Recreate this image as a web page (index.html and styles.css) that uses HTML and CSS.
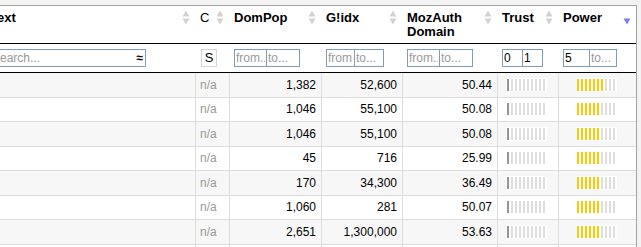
FILE: index.html
```html
<!DOCTYPE html>
<html>
<head>
<meta charset="utf-8">
<title>Table</title>
<link rel="stylesheet" href="styles.css">
</head>
<body>
<div class="page">
  <div class="tbl">
    <div class="row head">
      <div class="th"><span class="lbl">Text</span><svg class="sort" width="8" height="15" viewBox="0 0 8 15"><path d="M4 0.5L7.5 6.5H0.5Z"/><path d="M0.5 8.5H7.5L4 14.5Z"/></svg></div>
      <div class="th"><span class="lbl thin">C</span><svg class="sort" width="8" height="15" viewBox="0 0 8 15"><path d="M4 0.5L7.5 6.5H0.5Z"/><path d="M0.5 8.5H7.5L4 14.5Z"/></svg></div>
      <div class="th"><span class="lbl">DomPop</span><svg class="sort" width="8" height="15" viewBox="0 0 8 15"><path d="M4 0.5L7.5 6.5H0.5Z"/><path d="M0.5 8.5H7.5L4 14.5Z"/></svg></div>
      <div class="th"><span class="lbl">G!idx</span><svg class="sort" width="8" height="15" viewBox="0 0 8 15"><path d="M4 0.5L7.5 6.5H0.5Z"/><path d="M0.5 8.5H7.5L4 14.5Z"/></svg></div>
      <div class="th"><span class="lbl">MozAuth<br>Domain</span><svg class="sort" width="8" height="15" viewBox="0 0 8 15"><path d="M4 0.5L7.5 6.5H0.5Z"/><path d="M0.5 8.5H7.5L4 14.5Z"/></svg></div>
      <div class="th"><span class="lbl">Trust</span><svg class="sort" width="8" height="15" viewBox="0 0 8 15"><path d="M4 0.5L7.5 6.5H0.5Z"/><path d="M0.5 8.5H7.5L4 14.5Z"/></svg></div>
      <div class="th"><span class="lbl">Power</span><svg class="sort desc" width="8" height="15" viewBox="0 0 8 15"><path d="M0.5 8.5H7.5L4 14.5Z"/></svg></div>
    </div>
    <div class="row filters">
      <div class="tf"><div class="search"><input class="sin" type="text" placeholder="Search..."><span class="approx">≈</span></div></div>
      <div class="tf"><span class="sbtn">S</span></div>
      <div class="tf"><input class="fi w33" placeholder="from..."><input class="fi w34" placeholder="to..."></div>
      <div class="tf"><input class="fi w29" placeholder="from..."><input class="fi w30" placeholder="to..."></div>
      <div class="tf"><input class="fi w33" placeholder="from..."><input class="fi w34" placeholder="to..."></div>
      <div class="tf"><input class="fi w21" value="0"><input class="fi w21" value="1"></div>
      <div class="tf"><input class="fi w27" value="5"><input class="fi w28" placeholder="to..."></div>
    </div>

    <div class="row body alt">
      <div class="td"></div><div class="td na">n/a</div><div class="td num">1,382</div><div class="td num">52,600</div><div class="td num">50.44</div>
      <div class="td bc"><div class="bar trust"><i class="on"></i><i></i><i></i><i></i><i></i><i></i><i></i><i></i><i></i><i></i></div></div>
      <div class="td bc"><div class="bar power"><i class="on"></i><i class="on"></i><i class="on"></i><i class="on"></i><i class="on"></i><i class="on"></i><i class="on"></i><i></i><i></i><i></i></div></div>
    </div>
    <div class="row body">
      <div class="td"></div><div class="td na">n/a</div><div class="td num">1,046</div><div class="td num">55,100</div><div class="td num">50.08</div>
      <div class="td bc"><div class="bar trust"><i class="on"></i><i></i><i></i><i></i><i></i><i></i><i></i><i></i><i></i><i></i></div></div>
      <div class="td bc"><div class="bar power"><i class="on"></i><i class="on"></i><i class="on"></i><i class="on"></i><i class="on"></i><i class="on"></i><i></i><i></i><i></i><i></i></div></div>
    </div>
    <div class="row body alt">
      <div class="td"></div><div class="td na">n/a</div><div class="td num">1,046</div><div class="td num">55,100</div><div class="td num">50.08</div>
      <div class="td bc"><div class="bar trust"><i class="on"></i><i></i><i></i><i></i><i></i><i></i><i></i><i></i><i></i><i></i></div></div>
      <div class="td bc"><div class="bar power"><i class="on"></i><i class="on"></i><i class="on"></i><i class="on"></i><i class="on"></i><i class="on"></i><i></i><i></i><i></i><i></i></div></div>
    </div>
    <div class="row body">
      <div class="td"></div><div class="td na">n/a</div><div class="td num">45</div><div class="td num">716</div><div class="td num">25.99</div>
      <div class="td bc"><div class="bar trust"><i class="on"></i><i></i><i></i><i></i><i></i><i></i><i></i><i></i><i></i><i></i></div></div>
      <div class="td bc"><div class="bar power"><i class="on"></i><i class="on"></i><i class="on"></i><i class="on"></i><i class="on"></i><i class="on"></i><i></i><i></i><i></i><i></i></div></div>
    </div>
    <div class="row body alt">
      <div class="td"></div><div class="td na">n/a</div><div class="td num">170</div><div class="td num">34,300</div><div class="td num">36.49</div>
      <div class="td bc"><div class="bar trust"><i class="on"></i><i></i><i></i><i></i><i></i><i></i><i></i><i></i><i></i><i></i></div></div>
      <div class="td bc"><div class="bar power"><i class="on"></i><i class="on"></i><i class="on"></i><i class="on"></i><i class="on"></i><i class="on"></i><i></i><i></i><i></i><i></i></div></div>
    </div>
    <div class="row body">
      <div class="td"></div><div class="td na">n/a</div><div class="td num">1,060</div><div class="td num">281</div><div class="td num">50.07</div>
      <div class="td bc"><div class="bar trust"><i class="on"></i><i></i><i></i><i></i><i></i><i></i><i></i><i></i><i></i><i></i></div></div>
      <div class="td bc"><div class="bar power"><i class="on"></i><i class="on"></i><i class="on"></i><i class="on"></i><i class="on"></i><i class="on"></i><i></i><i></i><i></i><i></i></div></div>
    </div>
    <div class="row body alt">
      <div class="td"></div><div class="td na">n/a</div><div class="td num">2,651</div><div class="td num">1,300,000</div><div class="td num">53.63</div>
      <div class="td bc"><div class="bar trust"><i class="on"></i><i></i><i></i><i></i><i></i><i></i><i></i><i></i><i></i><i></i></div></div>
      <div class="td bc"><div class="bar power"><i class="on"></i><i class="on"></i><i class="on"></i><i class="on"></i><i class="on"></i><i class="on"></i><i></i><i></i><i></i><i></i></div></div>
    </div>
    <div class="row body">
      <div class="td"></div><div class="td"></div><div class="td"></div><div class="td"></div><div class="td"></div><div class="td"></div><div class="td"></div>
    </div>
  </div>
</div>
</body>
</html>
```

FILE: styles.css
```css
html, body {
  margin: 0;
  padding: 0;
  background: #f3f3f3;
  overflow: hidden;
  font-family: "Liberation Sans", Arial, sans-serif;
  color: #000;
}

.page {
  padding-top: 5px;
}

.tbl {
  box-sizing: border-box;
  width: 652px;
  margin-left: -15px;
  background: #fff;
  border-top: 1px solid #a3a3a3;
  border-right: 1px solid #a3a3a3;
}

.row {
  display: grid;
  grid-template-columns: 210px 34px 92px 81px 95px 61px 78px;
  box-sizing: border-box;
}

/* header */
.head {
  height: 38px;
  border-bottom: 1px solid #000;
}

.th {
  display: flex;
  justify-content: space-between;
  align-items: flex-start;
  padding: 4.5px 5px 0 5px;
  min-width: 0;
}

.lbl {
  font-size: 13px;
  font-weight: bold;
  line-height: 14.5px;
}

.lbl.thin {
  font-weight: normal;
}

.sort {
  flex: none;
  margin-top: -1px;
  fill: #d2d2d2;
}

.sort.desc {
  fill: #7c7cf2;
}

/* filter row */
.filters {
  height: 29px;
  border-bottom: 1px solid #000;
}

.tf {
  display: flex;
  align-items: flex-start;
  padding: 5px 0 0 5px;
  min-width: 0;
}

.tf:first-child {
  padding-left: 4px;
}

.search {
  box-sizing: border-box;
  display: flex;
  align-items: center;
  width: 157px;
  height: 18px;
  border: 1px solid #7f9db9;
  background: #fff;
}

.sin {
  flex: 1;
  min-width: 0;
  border: 0;
  padding: 0 0 0 2px;
  margin: 0;
  height: 16px;
  font: 12px "Liberation Sans", Arial, sans-serif;
  outline: none;
  background: transparent;
}

.sin::placeholder,
.fi::placeholder {
  color: #9a9a9a;
  opacity: 1;
}

.approx {
  font-size: 12px;
  font-weight: bold;
  line-height: 12px;
  padding-right: 2px;
}

.sbtn {
  box-sizing: border-box;
  width: 16px;
  height: 18px;
  margin-left: 1px;
  border: 1px solid #d6d6d6;
  background: #fff;
  font-size: 13px;
  line-height: 16px;
  text-align: center;
}

.fi {
  box-sizing: border-box;
  height: 18px;
  margin: 0;
  padding: 0 1px;
  border: 1px solid #7f9db9;
  background: #fff;
  font: 12px "Liberation Sans", Arial, sans-serif;
  color: #000;
  outline: none;
}

.fi + .fi {
  margin-left: -1px;
}

.w21 { width: 21px; }
.w27 { width: 27px; }
.w28 { width: 28px; }
.w29 { width: 29px; }
.w30 { width: 30px; }
.w33 { width: 33px; }
.w34 { width: 34px; }

/* body rows */
.body {
  height: 24.5px;
  border-bottom: 1px solid #dcdcdc;
  background: #fff;
}

.body.alt {
  background: #f7f7f7;
}

.td {
  display: flex;
  align-items: center;
  padding: 0 5px;
  font-size: 12px;
  border-left: 1px solid #dcdcdc;
  min-width: 0;
  white-space: nowrap;
}

.td:first-child {
  border-left: 0;
}

.na {
  color: #999;
  padding-left: 4px;
}

.num {
  justify-content: flex-end;
}

.bc {
  justify-content: center;
  padding: 0 3px 0 0;
}

.bar {
  display: flex;
  gap: 2px;
  padding: 1px 2px 1px 1px;
  background: #fff;
}

.bar i {
  display: block;
  width: 2px;
  height: 12px;
  background: #dedede;
}

.bar.trust i.on {
  background: #959595;
}

.bar.power i.on {
  background: #ffc800;
}
```
